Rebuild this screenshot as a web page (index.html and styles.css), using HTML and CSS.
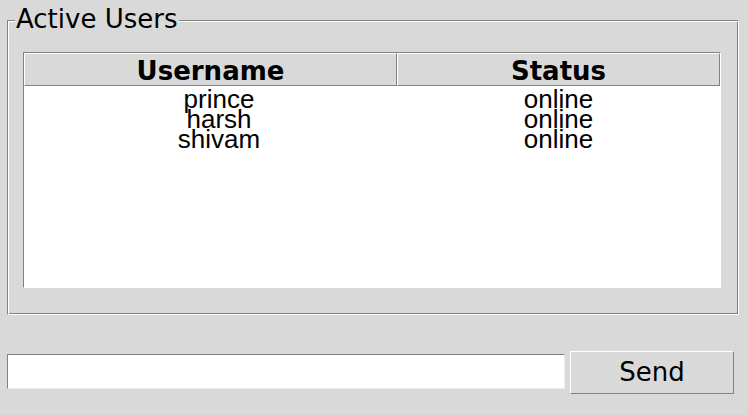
FILE: index.html
```html
<!DOCTYPE html>
<html>
<head>
<meta charset="utf-8">
<link rel="stylesheet" href="styles.css">
</head>
<body>
<div class="frame">
  <span class="frame-label">Active Users</span>
  <div class="tree">
    <div class="tree-head">
      <div class="th">Username</div>
      <div class="th">Status</div>
    </div>
    <div class="tree-body">
      <div class="row"><div class="cell user">prince</div><div class="cell">online</div></div>
      <div class="row"><div class="cell user">harsh</div><div class="cell">online</div></div>
      <div class="row"><div class="cell user">shivam</div><div class="cell">online</div></div>
    </div>
  </div>
</div>
<div class="send-row">
  <input class="entry" type="text">
  <button class="send-btn">Send</button>
</div>
</body>
</html>
```

FILE: styles.css
```css
html, body {
  margin: 0;
  padding: 0;
  background: #d9d9d9;
  width: 748px;
  height: 415px;
  overflow: hidden;
}
body {
  font-family: "DejaVu Sans", sans-serif;
  color: #000;
}
.frame {
  position: relative;
  margin: 20px 9px 0 7px;
  width: 732px;
  height: 295px;
  box-sizing: border-box;
  border: 1px solid;
  border-color: #828282 #ffffff #ffffff #828282;
  box-shadow: inset 1px 1px 0 #ffffff, inset -1px -1px 0 #828282;
  padding: 31px 15px 24px 15px;
}
.frame-label {
  position: absolute;
  left: 7px;
  top: -17px;
  background: #d9d9d9;
  font-size: 26px;
  line-height: 30px;
  padding: 0 1px;
}
.tree {
  width: 698px;
  height: 236px;
  box-sizing: border-box;
  border: 1px solid;
  border-color: #828282 #ffffff #ffffff #828282;
  display: flex;
  flex-direction: column;
}
.tree-head {
  display: grid;
  grid-template-columns: 373px 323px;
  height: 33px;
  flex: none;
}
.th {
  box-sizing: border-box;
  border: 1px solid;
  border-color: #ffffff #828282 #828282 #ffffff;
  background: #d9d9d9;
  text-align: center;
  font-weight: bold;
  font-size: 26px;
  line-height: 27px;
  padding-top: 4px;
}
.tree-body {
  flex: 1;
  background: #ffffff;
  font-family: "Liberation Sans", Arial, sans-serif;
  font-size: 26px;
}
.row {
  display: grid;
  grid-template-columns: 373px 323px;
  height: 20px;
  overflow: visible;
}
.cell {
  text-align: center;
  line-height: 26px;
  white-space: nowrap;
}
.cell.user {
  padding-left: 17px;
}
.send-row {
  display: flex;
  align-items: flex-start;
  gap: 5px;
  margin: 36px 0 0 7px;
}
.entry {
  width: 558px;
  height: 35px;
  box-sizing: border-box;
  margin: 3px 0 0 0;
  border: 1px solid;
  border-color: #828282 #ececec #ececec #828282;
  background: #ffffff;
  outline: none;
  padding: 0 4px;
  font-family: "DejaVu Sans", sans-serif;
  font-size: 20px;
}
.send-btn {
  width: 164px;
  height: 43px;
  box-sizing: border-box;
  margin: 0;
  padding: 0;
  border: 1px solid;
  border-color: #ffffff #828282 #828282 #ffffff;
  background: #d9d9d9;
  font-family: "DejaVu Sans", sans-serif;
  font-size: 26px;
  color: #000;
  line-height: 41px;
}
```
